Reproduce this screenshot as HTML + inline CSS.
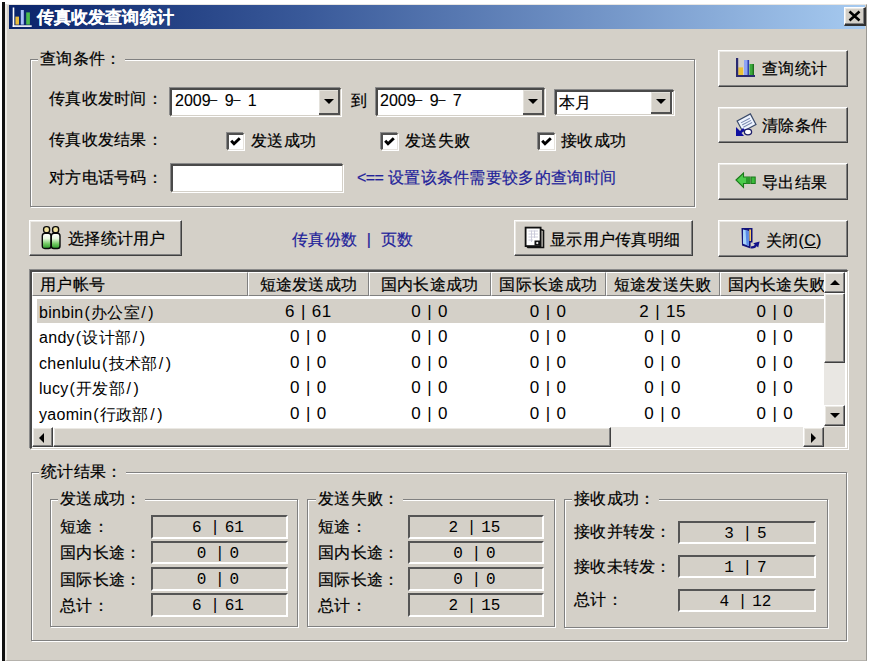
<!DOCTYPE html>
<html><head><meta charset="utf-8">
<style>
*{box-sizing:border-box;margin:0;padding:0}
html,body{width:869px;height:663px;overflow:hidden;background:#fff}
body{position:relative;font-family:"Liberation Sans",sans-serif;font-size:16px;color:#000;-webkit-text-stroke:0.2px currentColor;letter-spacing:0.3px}
.a{position:absolute}
.t{position:absolute;white-space:nowrap;line-height:16px}
#dlg{left:5px;top:4px;width:862px;height:657px;background:#d4d0c8;border-left:2px solid #ece9e4;border-top:1px solid #e8e6e2;border-right:1px solid #9a9893;border-bottom:1px solid #b5b2ac}
#blk{left:2px;top:2px;width:3px;height:659px;background:#111}
#title{left:9px;top:5px;width:856px;height:24px;background:linear-gradient(to right,#0a246a 0%,#3a5a9a 35%,#a6caf0 100%)}
.gb{position:absolute;border:1px solid #808080;box-shadow:1px 1px 0 #fff, inset 1px 1px 0 #fff}
.gbt{position:absolute;background:#d4d0c8;padding:0 3px 0 2px;white-space:nowrap;line-height:16px}
.sunk{position:absolute;background:#fff;border-top:2px solid #4a4a4a;border-left:2px solid #4a4a4a;border-right:1px solid #d4d0c8;border-bottom:1px solid #d4d0c8;box-shadow:-1px -1px 0 #8a8a8a,1px 1px 0 #fff}
.btn{position:absolute;background:#d4d0c8;border-top:1px solid #fff;border-left:1px solid #fff;border-right:1px solid #404040;border-bottom:1px solid #404040;box-shadow:inset -1px -1px 0 #808080,inset 1px 1px 0 #ebe9e4}
.cbtn{position:absolute;background:#d4d0c8;border-right:2px solid #505050;border-bottom:2px solid #505050;box-shadow:inset 1px 1px 0 #e4e2dc}
.arr{position:absolute;width:0;height:0;border-left:5px solid transparent;border-right:5px solid transparent;border-top:5px solid #000}
.cb{position:absolute;width:17px;height:17px;background:#fff;border-top:2px solid #505050;border-left:2px solid #505050;border-right:1px solid #e6e3de;border-bottom:1px solid #e6e3de;box-shadow:-1px -1px 0 #8a8a8a,1px 1px 0 #fff}
.val{position:absolute;background:#d4d0c8;border-top:2px solid #555;border-left:2px solid #555;border-right:2px solid #fff;border-bottom:2px solid #fff;text-align:center;line-height:19px;font-size:16px;font-family:"Liberation Mono",monospace;-webkit-text-stroke:0;letter-spacing:0}
.val{padding-right:3px}.val i{font-style:normal;position:relative;top:2px}.val .pp{margin:0 5px 0 8.5px}
.hd{position:absolute;background:#d4d0c8;border-top:1px solid #fff;border-left:1px solid #fff;border-right:1px solid #808080;border-bottom:1px solid #808080;box-shadow:1px 0 0 #fff}
.hd span{position:absolute;top:4px;white-space:nowrap;line-height:16px;-webkit-text-stroke:0.2px #000}
.dt{word-spacing:3px;letter-spacing:0;-webkit-text-stroke:0.1px #000}.dt i{font-style:normal;font-size:13px;margin:0 0 0 -0.5px;position:relative;top:-2px}
.rw{-webkit-text-stroke:0;line-height:24px;padding-top:2px}.rw b{font-weight:normal;display:inline-block;width:7.5px;text-align:center}.num{text-align:center;font-size:17px;word-spacing:0.5px;letter-spacing:0.6px;padding-top:1px}
.blue{color:#22229a}
</style></head><body>
<div id="blk" class="a"></div>
<div id="dlg" class="a"></div>
<div id="title" class="a"></div>
<div class="t" style="left:37px;top:9px;color:#fff;font-weight:bold;font-size:17px;line-height:17px;-webkit-text-stroke:0.15px #fff;letter-spacing:0.1px">传真收发查询统计</div>


<!-- group 1 -->
<div class="gb" style="left:30px;top:59px;width:665px;height:148px"></div>
<div class="gbt" style="left:38px;top:51px">查询条件：</div>
<div class="t" style="left:49px;top:91px">传真收发时间：</div>
<div class="t" style="left:49px;top:132px">传真收发结果：</div>
<div class="t" style="left:49px;top:170px">对方电话号码：</div>

<div class="sunk" style="left:170px;top:88px;width:171px;height:28px"></div>
<div class="t dt" style="left:175px;top:93px">2009<i>–</i> 9<i>–</i> 1</div>
<div class="sunk" style="left:376px;top:88px;width:169px;height:28px"></div>
<div class="t dt" style="left:380px;top:93px">2009<i>–</i> 9<i>–</i> 7</div>
<div class="sunk" style="left:555px;top:90px;width:119px;height:25px"></div>
<div class="t" style="left:559px;top:95px">本月</div>
<div class="t" style="left:351px;top:93px">到</div>
<!-- combo buttons -->
<div class="cbtn" style="left:319px;top:90px;width:21px;height:25px"><div class="arr" style="left:5px;top:9px"></div></div>
<div class="cbtn" style="left:523px;top:90px;width:21px;height:25px"><div class="arr" style="left:5px;top:9px"></div></div>
<div class="cbtn" style="left:651px;top:92px;width:21px;height:22px"><div class="arr" style="left:5px;top:7px"></div></div>


<div class="sunk" style="left:171px;top:164px;width:172px;height:28px"></div>
<div class="t blue" style="left:357px;top:170px"><span style="letter-spacing:-0.6px">&lt;==</span> 设置该条件需要较多的查询时间</div>

<div class="cb" style="left:227px;top:133px"></div>
<svg class="a" style="left:230px;top:137px" width="11" height="9" viewBox="0 0 11 9"><path d="M1.2 3.8 L4 6.8 L9.8 1.2" stroke="#000" stroke-width="2.9" fill="none"/></svg>
<div class="t" style="left:251px;top:133px">发送成功</div>
<div class="cb" style="left:381px;top:133px"></div>
<svg class="a" style="left:384px;top:137px" width="11" height="9" viewBox="0 0 11 9"><path d="M1.2 3.8 L4 6.8 L9.8 1.2" stroke="#000" stroke-width="2.9" fill="none"/></svg>
<div class="t" style="left:405px;top:133px">发送失败</div>
<div class="cb" style="left:538px;top:133px"></div>
<svg class="a" style="left:541px;top:137px" width="11" height="9" viewBox="0 0 11 9"><path d="M1.2 3.8 L4 6.8 L9.8 1.2" stroke="#000" stroke-width="2.9" fill="none"/></svg>
<div class="t" style="left:561px;top:133px">接收成功</div>

<!-- right buttons -->
<div class="btn" style="left:718px;top:50px;width:130px;height:37px"></div>
<div class="t" style="left:762px;top:61px">查询统计</div>
<div class="btn" style="left:718px;top:107px;width:130px;height:36px"></div>
<div class="t" style="left:762px;top:118px">清除条件</div>
<div class="btn" style="left:718px;top:163px;width:130px;height:37px"></div>
<div class="t" style="left:762px;top:175px">导出结果</div>
<div class="btn" style="left:718px;top:220px;width:130px;height:37px"></div>
<div class="t" style="left:766px;top:232.5px">关闭(<u>C</u>)</div>

<div class="btn" style="left:29px;top:220px;width:153px;height:36px"></div>
<div class="t" style="left:68px;top:231px">选择统计用户</div>
<div class="t blue" style="left:292px;top:232px">传真份数 &nbsp;| &nbsp;页数</div>
<div class="btn" style="left:514px;top:220px;width:179px;height:36px"></div>
<div class="t" style="left:550px;top:231.5px">显示用户传真明细</div>

<!-- listview -->
<div class="sunk" style="left:30px;top:270px;width:818px;height:179px"></div>
<div class="a lv" style="left:32px;top:272px;width:792px;height:155px;overflow:hidden;background:#fff">
<div class="hd" style="left:0px;top:0;width:216px;height:24px;"><span style="left:7px">用户帐号</span></div>
<div class="hd" style="left:216px;top:0;width:121px;height:24px;"><span style="left:0;right:0;text-align:center">短途发送成功</span></div>
<div class="hd" style="left:337px;top:0;width:121.5px;height:24px;"><span style="left:0;right:0;text-align:center">国内长途成功</span></div>
<div class="hd" style="left:458.5px;top:0;width:115.5px;height:24px;"><span style="left:0;right:0;text-align:center">国际长途成功</span></div>
<div class="hd" style="left:574px;top:0;width:113.5px;height:24px;"><span style="left:0;right:0;text-align:center">短途发送失败</span></div>
<div class="hd" style="left:687.5px;top:0;width:111px;height:24px;"><span style="left:7px">国内长途失败</span></div>
<div class="a" style="left:5px;top:26.5px;width:787px;height:24px;background:#d4d0c8"></div>
<div class="t rw" style="left:7px;top:26.5px">binbin<b>(</b>办公室<b>/</b><b>)</b></div>
<div class="t rw num" style="left:216px;width:121px;top:26.5px">6 | 61</div>
<div class="t rw num" style="left:337px;width:121.5px;top:26.5px">0 | 0</div>
<div class="t rw num" style="left:458.5px;width:115.5px;top:26.5px">0 | 0</div>
<div class="t rw num" style="left:574px;width:113.5px;top:26.5px">2 | 15</div>
<div class="t rw num" style="left:687.5px;width:111px;top:26.5px">0 | 0</div>
<div class="t rw" style="left:7px;top:52.1px">andy<b>(</b>设计部<b>/</b><b>)</b></div>
<div class="t rw num" style="left:216px;width:121px;top:52.1px">0 | 0</div>
<div class="t rw num" style="left:337px;width:121.5px;top:52.1px">0 | 0</div>
<div class="t rw num" style="left:458.5px;width:115.5px;top:52.1px">0 | 0</div>
<div class="t rw num" style="left:574px;width:113.5px;top:52.1px">0 | 0</div>
<div class="t rw num" style="left:687.5px;width:111px;top:52.1px">0 | 0</div>
<div class="t rw" style="left:7px;top:77.7px">chenlulu<b>(</b>技术部<b>/</b><b>)</b></div>
<div class="t rw num" style="left:216px;width:121px;top:77.7px">0 | 0</div>
<div class="t rw num" style="left:337px;width:121.5px;top:77.7px">0 | 0</div>
<div class="t rw num" style="left:458.5px;width:115.5px;top:77.7px">0 | 0</div>
<div class="t rw num" style="left:574px;width:113.5px;top:77.7px">0 | 0</div>
<div class="t rw num" style="left:687.5px;width:111px;top:77.7px">0 | 0</div>
<div class="t rw" style="left:7px;top:103.3px">lucy<b>(</b>开发部<b>/</b><b>)</b></div>
<div class="t rw num" style="left:216px;width:121px;top:103.3px">0 | 0</div>
<div class="t rw num" style="left:337px;width:121.5px;top:103.3px">0 | 0</div>
<div class="t rw num" style="left:458.5px;width:115.5px;top:103.3px">0 | 0</div>
<div class="t rw num" style="left:574px;width:113.5px;top:103.3px">0 | 0</div>
<div class="t rw num" style="left:687.5px;width:111px;top:103.3px">0 | 0</div>
<div class="t rw" style="left:7px;top:128.9px">yaomin<b>(</b>行政部<b>/</b><b>)</b></div>
<div class="t rw num" style="left:216px;width:121px;top:128.9px">0 | 0</div>
<div class="t rw num" style="left:337px;width:121.5px;top:128.9px">0 | 0</div>
<div class="t rw num" style="left:458.5px;width:115.5px;top:128.9px">0 | 0</div>
<div class="t rw num" style="left:574px;width:113.5px;top:128.9px">0 | 0</div>
<div class="t rw num" style="left:687.5px;width:111px;top:128.9px">0 | 0</div>
</div>
<div class="a" style="left:824px;top:272px;width:21px;height:155px;background:#e9e7e3"></div>
<div class="btn" style="left:824px;top:272px;width:21px;height:21px"><div class="arr" style="left:5px;top:7px;border-top:0;border-bottom:5px solid #000"></div></div>
<div class="btn" style="left:824px;top:293px;width:21px;height:70px"></div>
<div class="btn" style="left:824px;top:405px;width:21px;height:21px"><div class="arr" style="left:5px;top:7px"></div></div>
<div class="a" style="left:32px;top:427px;width:792px;height:20px;background:#e9e7e3"></div>
<div class="btn" style="left:32px;top:427px;width:21px;height:20px"><div class="arr" style="left:6px;top:5px;border-left:0;border-top:5px solid transparent;border-bottom:5px solid transparent;border-right:5px solid #000"></div></div>
<div class="btn" style="left:53px;top:427px;width:558px;height:20px"></div>
<div class="btn" style="left:803px;top:427px;width:21px;height:20px"><div class="arr" style="left:7px;top:5px;border-right:0;border-top:5px solid transparent;border-bottom:5px solid transparent;border-left:5px solid #000"></div></div>
<div class="a" style="left:824px;top:427px;width:21px;height:20px;background:#d4d0c8"></div>

<!-- stats -->
<div class="gb" style="left:31px;top:472px;width:816px;height:169px"></div>
<div class="gbt" style="left:39px;top:464px">统计结果：</div>
<div class="gb" style="left:50px;top:499px;width:248px;height:128px"></div>
<div class="gbt" style="left:58px;top:491px">发送成功：</div>
<div class="gb" style="left:307px;top:499px;width:248px;height:128px"></div>
<div class="gbt" style="left:316px;top:491px">发送失败：</div>
<div class="gb" style="left:564px;top:499px;width:264px;height:129px"></div>
<div class="gbt" style="left:572px;top:491px">接收成功：</div>
<div class="t" style="left:60px;top:519px">短途：</div>
<div class="t" style="left:60px;top:545px">国内长途：</div>
<div class="t" style="left:60px;top:572px">国际长途：</div>
<div class="t" style="left:60px;top:598px">总计：</div>
<div class="val" style="left:151px;top:515px;width:137px;height:24px"><i>6</i><i class="pp">|</i><i>61</i></div>
<div class="val" style="left:151px;top:541px;width:137px;height:23px"><i>0</i><i class="pp">|</i><i>0</i></div>
<div class="val" style="left:151px;top:567px;width:137px;height:24px"><i>0</i><i class="pp">|</i><i>0</i></div>
<div class="val" style="left:151px;top:593px;width:137px;height:24px"><i>6</i><i class="pp">|</i><i>61</i></div>
<div class="t" style="left:318px;top:519px">短途：</div>
<div class="t" style="left:318px;top:545px">国内长途：</div>
<div class="t" style="left:318px;top:572px">国际长途：</div>
<div class="t" style="left:318px;top:598px">总计：</div>
<div class="val" style="left:408px;top:515px;width:136px;height:24px"><i>2</i><i class="pp">|</i><i>15</i></div>
<div class="val" style="left:408px;top:541px;width:136px;height:23px"><i>0</i><i class="pp">|</i><i>0</i></div>
<div class="val" style="left:408px;top:567px;width:136px;height:24px"><i>0</i><i class="pp">|</i><i>0</i></div>
<div class="val" style="left:408px;top:593px;width:136px;height:24px"><i>2</i><i class="pp">|</i><i>15</i></div>
<div class="t" style="left:574px;top:524px">接收并转发：</div>
<div class="t" style="left:574px;top:559px">接收未转发：</div>
<div class="t" style="left:574px;top:592px">总计：</div>
<div class="val" style="left:678px;top:521px;width:138px;height:23px"><i>3</i><i class="pp">|</i><i>5</i></div>
<div class="val" style="left:678px;top:555px;width:138px;height:23px"><i>1</i><i class="pp">|</i><i>7</i></div>
<div class="val" style="left:678px;top:589px;width:138px;height:23px"><i>4</i><i class="pp">|</i><i>12</i></div>
<!-- title icon -->
<svg class="a" style="left:12px;top:7px" width="21" height="21" viewBox="0 0 21 21">
<rect x="0.7" y="0.5" width="1.6" height="19.5" fill="#fff"/><rect x="0.7" y="18.3" width="19" height="1.6" fill="#fff"/>
<rect x="3.4" y="9.6" width="3.6" height="8" fill="#e8bc3c"/><rect x="8.8" y="3" width="3" height="14.6" fill="#a8c0f8"/><rect x="14.2" y="5.4" width="3.7" height="12.2" fill="#4cbc4c"/>
</svg>
<!-- close button -->
<div class="btn" style="left:844px;top:7px;width:22px;height:19px;border-right:2px solid #303030;border-bottom:2px solid #303030"></div>
<svg class="a" style="left:848px;top:10px" width="13" height="12" viewBox="0 0 13 12"><path d="M1.5 1.5 L11.5 10.5 M11.5 1.5 L1.5 10.5" stroke="#000" stroke-width="2.6"/></svg>
<!-- chart button icon -->
<svg class="a" style="left:735px;top:57px" width="21" height="21" viewBox="0 0 21 21">
<rect x="3.3" y="10.4" width="4.7" height="7.8" fill="#ecc235"/>
<rect x="9" y="3" width="4" height="15.2" fill="#90a4f4"/><rect x="12.5" y="3" width="1.6" height="15.2" fill="#2f3fb0"/>
<rect x="14.5" y="7" width="4.5" height="11.2" fill="#3aa83a"/><rect x="17.6" y="7" width="1.4" height="11.2" fill="#1f6f1f"/>
<rect x="1" y="1" width="2.2" height="19" fill="#2a2a70"/><rect x="1" y="18" width="19" height="2" fill="#2a2a70"/>
</svg>
<!-- clear icon -->
<svg class="a" style="left:735px;top:111px" width="24" height="26" viewBox="0 0 24 26">
<g transform="translate(0 1.5) rotate(-28 12 10)"><rect x="4" y="4" width="15" height="12" fill="#eef4ff" stroke="#3a4a6a" stroke-width="1.2"/>
<path d="M6.5 7.5 H16.5 M6.5 10 H16.5 M6.5 12.5 H16.5" stroke="#7a8ab0" stroke-width="1.1"/></g>
<path d="M1 16 L1 25 L9 25 L6.5 22 L10 19 L8 17 L5 20 Z" fill="#1010a0"/>
<ellipse cx="13" cy="21" rx="3.6" ry="2.8" fill="#fff" stroke="#20206a" stroke-width="1.3"/>
</svg>
<!-- export icon -->
<svg class="a" style="left:735px;top:172px" width="22" height="17" viewBox="0 0 22 17">
<path d="M1 8 L8.5 1 L8.5 5 L15 5 L15 11.5 L8.5 11.5 L8.5 15.5 Z" fill="#4ccc4c" stroke="#1a7a1a" stroke-width="1.1"/>
<rect x="11" y="5" width="4" height="6.5" fill="#2a9a2a"/>
<rect x="16.2" y="5" width="4" height="6.5" fill="#3aba3a" stroke="#1a7a1a" stroke-width="1"/>
</svg>
<!-- close icon -->
<svg class="a" style="left:740px;top:227px" width="21" height="23" viewBox="0 0 21 23">
<path d="M1.5 1 L12.5 1 L12.5 15.5 L10.6 15.5 L10.6 21.5 L2 18.5 Z" fill="#12127a"/>
<path d="M3 2.6 L8.6 4 L9 19 L3 16.8 Z" fill="#a8d4fa"/>
<path d="M5.5 3.5 L8.6 4 L9 19 L6.5 18 Z" fill="#5a8ae8"/>
<path d="M9.2 2.6 L11 2.6 L11 14 L9.4 14 Z" fill="#f4c860"/>
<path d="M11 20.3 Q15 20.8 16.2 17.6" stroke="#12128a" stroke-width="2.3" fill="none"/>
<path d="M13.2 16.2 L19.6 14.6 L18.2 20.6 Z" fill="#12128a"/>
</svg>
<!-- users icon -->
<svg class="a" style="left:41px;top:225px" width="21" height="25" viewBox="0 0 21 25">
<defs><linearGradient id="ug" x1="0" y1="0" x2="0" y2="1"><stop offset="0" stop-color="#ffffff"/><stop offset="0.35" stop-color="#e8f8e0"/><stop offset="0.7" stop-color="#70c860"/><stop offset="1" stop-color="#2a9a2a"/></linearGradient></defs>
<g stroke="#0a0a0a" stroke-width="1.4">
<rect x="2.6" y="1.6" width="6" height="6.2" rx="2.6" fill="#f2e4a0"/>
<rect x="11.6" y="1.6" width="6" height="6.2" rx="2.6" fill="#f2e4a0"/>
<path d="M1.3 11 Q1.3 8.2 4 8.2 H7.4 Q10 8.2 10 11 V21 Q10 23.5 7.5 23.5 H3.8 Q1.3 23.5 1.3 21 Z" fill="url(#ug)"/>
<path d="M10.3 11 Q10.3 8.2 13 8.2 H16.4 Q19 8.2 19 11 V21 Q19 23.5 16.5 23.5 H12.8 Q10.3 23.5 10.3 21 Z" fill="url(#ug)"/>
</g>
</svg>
<!-- detail icon -->
<svg class="a" style="left:524px;top:226px" width="21" height="23" viewBox="0 0 21 23">
<rect x="1.6" y="1.6" width="15" height="18.5" fill="#fff" stroke="#111" stroke-width="1.8"/>
<path d="M17 3.5 L19.5 4.5 L19.5 21.5 L4 21.5 L3 20.5" fill="none" stroke="#111" stroke-width="1.6"/>
<path d="M4.5 5 H14 M4.5 8 H14 M4.5 11 H14 M4.5 14 H9 M7.5 4.5 V16 M10.5 4.5 V12" stroke="#c8c8d8" stroke-width="0.9"/>
<rect x="10.5" y="14.5" width="5.5" height="5" fill="#111"/><path d="M11.8 17 L13.2 15.8 L14.7 17 L13.2 18.2 Z" fill="#fff"/>
</svg>

</body></html>
